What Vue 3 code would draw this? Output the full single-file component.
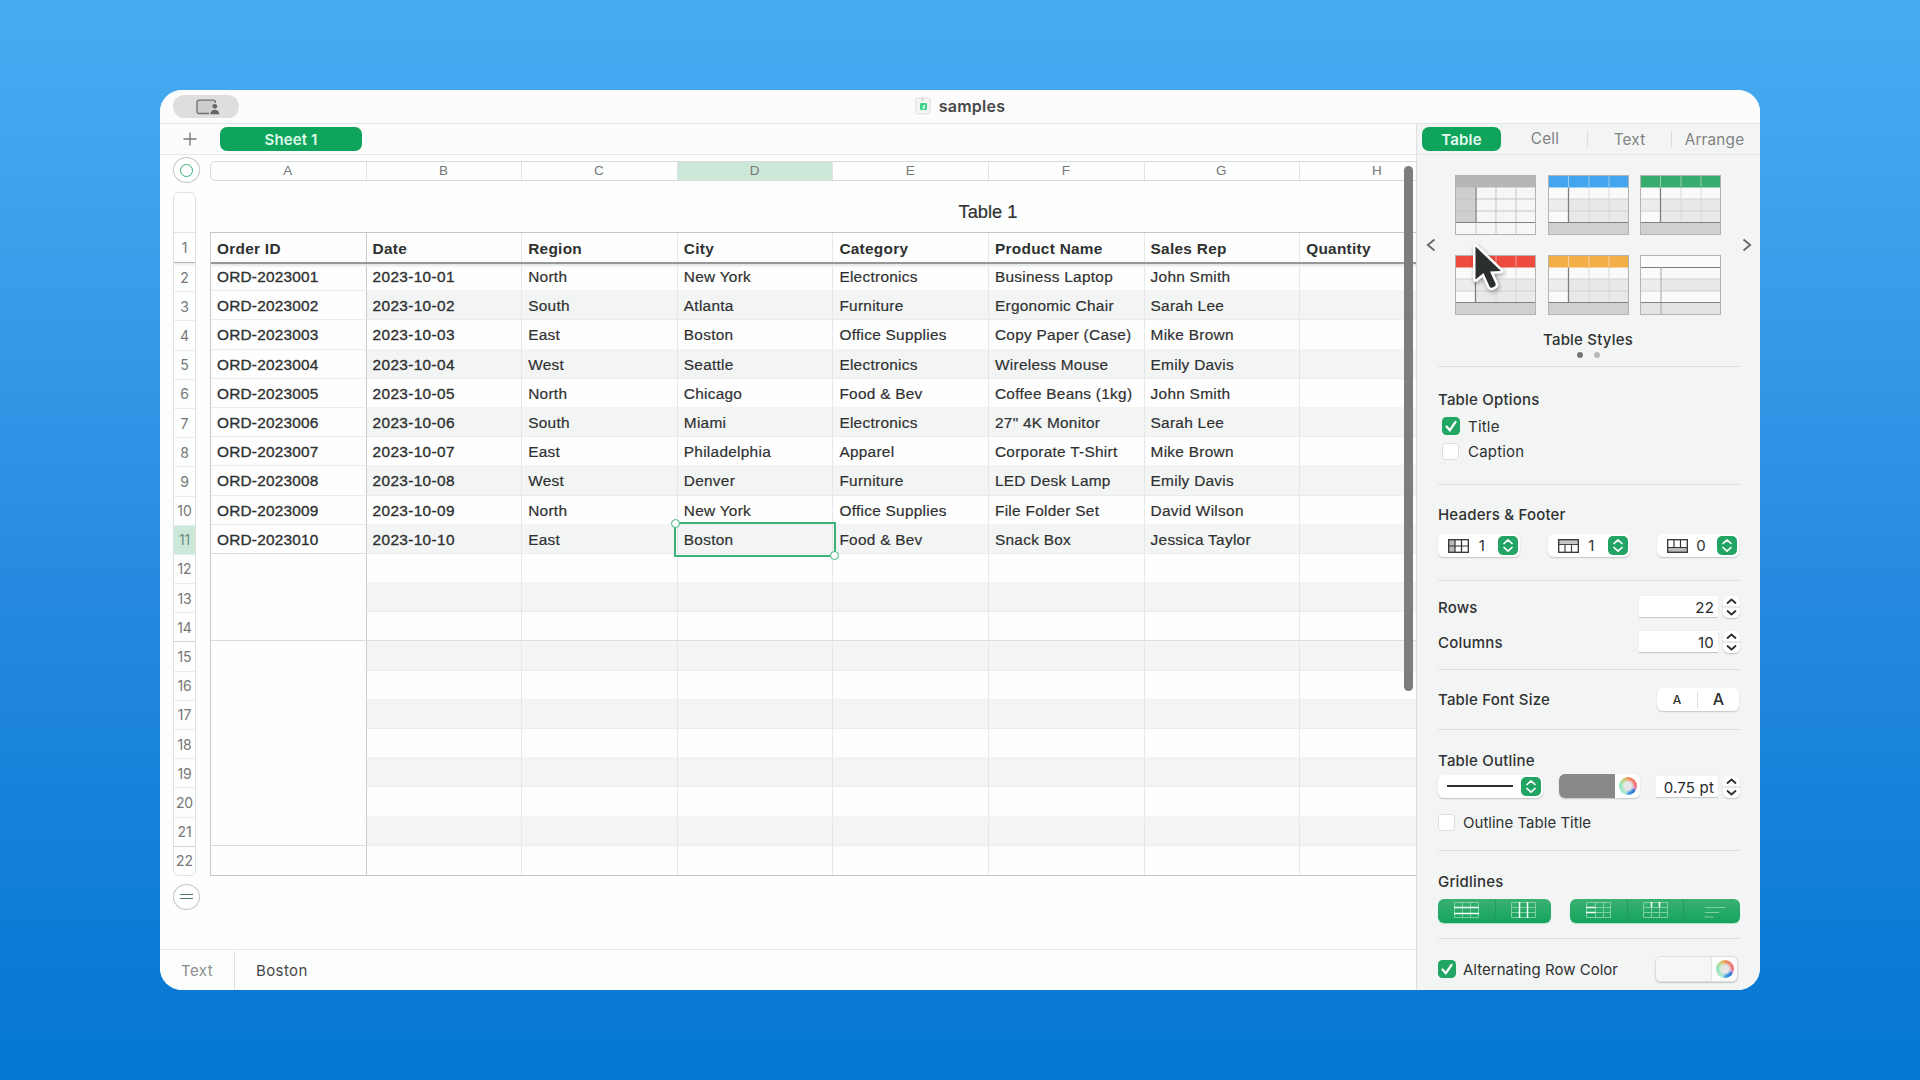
<script setup>
const letters = ['A', 'B', 'C', 'D', 'E', 'F', 'G', 'H']
const heads = ['Order ID', 'Date', 'Region', 'City', 'Category', 'Product Name', 'Sales Rep', 'Quantity']
const orders = [
  ['ORD-2023001', '2023-10-01', 'North', 'New York', 'Electronics', 'Business Laptop', 'John Smith'],
  ['ORD-2023002', '2023-10-02', 'South', 'Atlanta', 'Furniture', 'Ergonomic Chair', 'Sarah Lee'],
  ['ORD-2023003', '2023-10-03', 'East', 'Boston', 'Office Supplies', 'Copy Paper (Case)', 'Mike Brown'],
  ['ORD-2023004', '2023-10-04', 'West', 'Seattle', 'Electronics', 'Wireless Mouse', 'Emily Davis'],
  ['ORD-2023005', '2023-10-05', 'North', 'Chicago', 'Food & Bev', 'Coffee Beans (1kg)', 'John Smith'],
  ['ORD-2023006', '2023-10-06', 'South', 'Miami', 'Electronics', '27" 4K Monitor', 'Sarah Lee'],
  ['ORD-2023007', '2023-10-07', 'East', 'Philadelphia', 'Apparel', 'Corporate T-Shirt', 'Mike Brown'],
  ['ORD-2023008', '2023-10-08', 'West', 'Denver', 'Furniture', 'LED Desk Lamp', 'Emily Davis'],
  ['ORD-2023009', '2023-10-09', 'North', 'New York', 'Office Supplies', 'File Folder Set', 'David Wilson'],
  ['ORD-2023010', '2023-10-10', 'East', 'Boston', 'Food & Bev', 'Snack Box', 'Jessica Taylor'],
]
const rows = Array.from({ length: 21 }, (_, i) => ({ n: i + 2, cells: letters.map((_, c) => (orders[i] || [])[c] || '') }))
const styles = [
  { head: '#b5b7b7', kind: 'grey' },
  { head: '#43a5ee', kind: 'band' },
  { head: '#38ac6c', kind: 'band' },
  { head: '#ee4b3e', kind: 'band' },
  { head: '#f3ae48', kind: 'band' },
  { head: '#fcfcfc', kind: 'plain' },
]
const headerMenus = [
  { v: '1', kind: 'col' },
  { v: '1', kind: 'row' },
  { v: '0', kind: 'foot' },
]
</script>

<template>
  <div class="desktop">
    <div class="window">
      <header class="titlebar">
        <div class="pill">
          <svg width="24" height="16" viewBox="0 0 24 16">
            <path d="M13 14.500H3A1.800 1.800 0 0 1 1 12.700V3A1.800 1.800 0 0 1 3 1.200H17.500A1.800 1.800 0 0 1 19.500 3V4" fill="#cdcdcd" stroke="#6f6f6f" stroke-width="1.300" />
            <circle cx="18.800" cy="7.300" r="2.400" fill="#666" />
            <path d="M14.300 15.300c0-3 1.800-4.600 4.500-4.600s4.500 1.600 4.500 4.600z" fill="#666" />
          </svg>
        </div>
        <div class="doc">
          <svg width="16" height="18" viewBox="0 0 16 18">
            <rect x="1" y="1" width="14" height="16" rx="1.500" fill="#f6f6f6" stroke="#dcdcdc" />
            <path d="M7.500 0v4" stroke="#cfd4d1" stroke-width="2" />
            <rect x="5" y="6" width="7" height="7" rx="1" fill="#3fd28a" />
            <path d="M7 10.500h1.500V8H10v3.500H7z" fill="#e9fff4" />
          </svg>
          <span>samples</span>
        </div>
      </header>

      <div class="body">
        <main class="main">
          <div class="sheetbar">
            <svg class="plus" width="14" height="14" viewBox="0 0 14 14"><path d="M7 .5v13M.5 7h13" stroke="#777" stroke-width="1.400" /></svg>
            <div class="sheet">Sheet 1</div>
          </div>

          <div class="canvas">
            <div class="gutter">
              <div class="round"><i class="ring"></i></div>
              <div class="nums">
                <div class="n blank"></div>
                <div class="n first">1</div>
                <div v-for="r in rows" :key="r.n" class="n" :class="{ on: r.n === 11, ruled: [14, 21].includes(r.n) }">{{ r.n }}</div>
              </div>
              <div class="round"><i class="eq"></i></div>
            </div>
            <div class="sheetarea">
              <div class="letters">
                <div v-for="l in letters" :key="l" class="l" :class="{ on: l === 'D' }">{{ l }}</div>
              </div>
              <div class="tname">Table 1</div>
              <div class="table">
                <div class="tr head">
                  <div v-for="(h, i) in heads" :key="i" class="td">{{ h }}</div>
                </div>
                <div v-for="r in rows" :key="r.n" class="tr" :class="{ alt: r.n % 2, full: [11, 14, 21].includes(r.n), empty: r.n > 11 }">
                  <div v-for="(c, i) in r.cells" :key="i" class="td">
                    {{ c }}
                    <span v-if="r.n === 11 && i === 3" class="sel"><i></i><i></i></span>
                  </div>
                </div>
              </div>
            </div>
            <div class="scroll"></div>
          </div>

          <footer class="status">
            <span class="kind">Text</span>
            <span class="value">Boston</span>
          </footer>
        </main>

        <aside class="side">
          <nav class="tabs">
            <span class="tab on">Table</span>
            <span class="tab cell">Cell</span>
            <span class="tab text">Text</span>
            <span class="tab arr">Arrange</span>
          </nav>

          <section class="styles">
            <div class="picker">
              <svg width="10" height="14" viewBox="0 0 10 14"><path d="M8.500 1.500L1.800 7l6.700 5.500" fill="none" stroke="#666" stroke-width="1.800" /></svg>
              <div class="thumbs">
                <svg v-for="(s, i) in styles" :key="i" width="81" height="60" viewBox="0 0 81 60">
                  <rect x=".5" y=".5" width="80" height="59" :fill="s.kind === 'grey' ? '#f6f6f6' : '#fafafa'" />
                  <template v-if="s.kind === 'grey'">
                    <rect x="0" y="12" width="20" height="35" fill="#cdcfcf" />
                    <path d="M0 24h81M0 36h81M41 12v47M61 12v47" stroke="#c3c5c5" />
                    <path d="M21 12v35" stroke="#8a8c8c" stroke-width="1.500" />
                    <path d="M21 47v12" stroke="#c3c5c5" />
                  </template>
                  <template v-else>
                    <rect v-if="s.kind === 'plain'" x="21" y="24" width="60" height="12" fill="#e7e8ea" />
                    <rect v-else x="21" y="24" width="60" height="23" fill="#e8e9eb" />
                    <rect x="0" y="24" width="20" height="12" fill="#ededee" />
                    <path d="M0 24h81M0 36h81" stroke="#cfd1d2" />
                    <path v-if="s.kind === 'band'" d="M41 12v35M61 12v35" stroke="#d6d8d9" />
                    <rect x="0" y="48" width="81" height="12" :fill="s.kind === 'plain' ? '#e2e3e4' : '#cfd0d0'" />
                  </template>
                  <rect x="0" y="0" width="81" height="12.500" :fill="s.head" />
                  <path v-if="s.kind === 'band'" d="M20.500 1v11M41 1v11M61 1v11" stroke="#fff" stroke-opacity=".45" />
                  <path v-if="s.kind === 'plain'" d="M0 12.500h81" stroke="#7b7d7d" />
                  <path v-if="s.kind === 'plain'" d="M21 12v47" stroke="#a3a5a5" />
                  <path v-if="s.kind === 'band'" d="M20.500 12.500v35" stroke="#7e8080" stroke-width="1.300" />
                  <path d="M0 47.500h81" stroke="#808282" />
                  <rect x=".5" y=".5" width="80" height="59" fill="none" stroke="#b2b4b4" />
                </svg>
              </div>
              <svg width="10" height="14" viewBox="0 0 10 14"><path d="M1.500 1.500L8.200 7l-6.700 5.500" fill="none" stroke="#666" stroke-width="1.800" /></svg>
            </div>
            <div class="slabel">Table Styles</div>
            <div class="dots"><i></i><i></i></div>
          </section>

          <section class="sec s-opt">
            <h4>Table Options</h4>
            <label class="check indent"><svg width="18" height="18" viewBox="0 0 18 18"><rect width="18" height="18" rx="4.500" fill="#21a663" /><path d="M4.500 9.500l3.300 3.700L13.500 5" fill="none" stroke="#fff" stroke-width="2.200" stroke-linecap="round" /></svg>Title</label>
            <label class="check indent"><i class="box"></i>Caption</label>
          </section>

          <section class="sec s-head">
            <h4>Headers &amp; Footer</h4>
            <div class="line">
              <div v-for="(m, i) in headerMenus" :key="i" class="menu">
                <svg width="21" height="14" viewBox="0 0 21 14">
                  <rect x=".7" y=".7" width="19.600" height="12.600" fill="#fff" />
                  <rect v-if="m.kind === 'col'" x="1" y="1" width="6" height="12" fill="#b9bbbb" />
                  <rect v-if="m.kind === 'row'" x="1" y="1" width="19" height="4.500" fill="#c4c6c6" />
                  <rect v-if="m.kind === 'foot'" x="1" y="8.500" width="19" height="4.500" fill="#b9bbbb" />
                  <path v-if="m.kind === 'col'" d="M7 1v12M13.500 1v12M1 7h19" stroke="#333" stroke-width="1.200" />
                  <path v-if="m.kind === 'row'" d="M7 5.500V13M13.500 5.500V13M1 5.500h19" stroke="#444" stroke-width="1.200" />
                  <path v-if="m.kind === 'foot'" d="M7 1v7.500M13.500 1v7.500M1 8.500h19" stroke="#333" stroke-width="1.200" />
                  <rect x=".7" y=".7" width="19.600" height="12.600" fill="none" stroke="#333" stroke-width="1.300" />
                </svg>
                <b>{{ m.v }}</b>
                <svg class="ud" width="20" height="19" viewBox="0 0 20 19"><rect width="20" height="19" rx="5" fill="#22a564" /><path d="M6 7.500l4-3.700 4 3.700M6 11.500l4 3.700 4-3.700" fill="none" stroke="#fff" stroke-width="1.700" stroke-linecap="round" stroke-linejoin="round" /></svg>
              </div>
            </div>
          </section>

          <section class="sec s-rows">
            <div v-for="f in [['Rows', '22'], ['Columns', '10']]" :key="f[0]" class="frow">
              <h4>{{ f[0] }}</h4>
              <span class="field">{{ f[1] }}</span>
              <span class="step"><svg width="17" height="22" viewBox="0 0 17 22"><path d="M4.500 7l4-3.500 4 3.500M4.500 15l4 3.500 4-3.500" fill="none" stroke="#2d2d2d" stroke-width="1.800" stroke-linecap="round" stroke-linejoin="round" /><path d="M0 11h17" stroke="#d0d2d2" /></svg></span>
            </div>
          </section>

          <section class="sec s-font">
            <h4>Table Font Size</h4>
            <div class="seg"><span class="sm">A</span><span class="lg">A</span></div>
          </section>

          <section class="sec s-outline">
            <h4>Table Outline</h4>
            <div class="line">
              <div class="menu wide">
                <i class="stroke"></i>
                <svg class="ud" width="20" height="19" viewBox="0 0 20 19"><rect width="20" height="19" rx="5" fill="#22a564" /><path d="M6 7.500l4-3.700 4 3.700M6 11.500l4 3.700 4-3.700" fill="none" stroke="#fff" stroke-width="1.700" stroke-linecap="round" stroke-linejoin="round" /></svg>
              </div>
              <div class="color"><i class="fill dark"></i><i class="wheel"></i></div>
              <span class="field pt">0.75 pt</span>
              <span class="step"><svg width="17" height="22" viewBox="0 0 17 22"><path d="M4.500 7l4-3.500 4 3.500M4.500 15l4 3.500 4-3.500" fill="none" stroke="#2d2d2d" stroke-width="1.800" stroke-linecap="round" stroke-linejoin="round" /><path d="M0 11h17" stroke="#d0d2d2" /></svg></span>
            </div>
            <label class="check tight"><i class="box"></i>Outline Table Title</label>
          </section>

          <section class="sec s-grid">
            <h4>Gridlines</h4>
            <div class="line">
              <div class="gseg two">
                <span><svg width="25" height="16" viewBox="0 0 25 16"><path d="M.5.5h24v15H.5zM8.500.5v15M16.500.5v15" fill="none" stroke="#7fcfa2" /><path d="M0 5.500h25M0 11.500h25" stroke="#f2fff8" stroke-width="1.400" /></svg></span>
                <span><svg width="25" height="16" viewBox="0 0 25 16"><path d="M.5.5h24v15H.5zM.5 5.500h24M.5 10.500h24" fill="none" stroke="#7fcfa2" /><path d="M8.500 0v16M16.500 0v16" stroke="#f2fff8" stroke-width="1.500" /></svg></span>
              </div>
              <div class="gseg three">
                <span><svg width="25" height="16" viewBox="0 0 25 16"><path d="M.5.5h24v15H.5zM9.500.5v15M17.500.5v15M.5 5.500h24M.5 10.500h24" fill="none" stroke="#7fcfa2" /><path d="M0 5.500h9.500M0 10.500h9.500" stroke="#f2fff8" stroke-width="1.600" /></svg></span>
                <span><svg width="25" height="16" viewBox="0 0 25 16"><path d="M.5.5h24v15H.5zM8.500.5v15M16.500.5v15M.5 5.500h24M.5 10.500h24" fill="none" stroke="#7fcfa2" /><path d="M8.500 0v5.500M16.500 0v5.500" stroke="#f2fff8" stroke-width="1.600" /></svg></span>
                <span><svg width="25" height="16" viewBox="0 0 25 16"><path d="M5 5.500h20M5 10.500h14M4.500 15h9" fill="none" stroke="#7fcfa2" /></svg></span>
              </div>
            </div>
          </section>

          <section class="sec s-alt">
            <label class="check tight"><svg width="18" height="18" viewBox="0 0 18 18"><rect width="18" height="18" rx="4.500" fill="#21a663" /><path d="M4.500 9.500l3.300 3.700L13.500 5" fill="none" stroke="#fff" stroke-width="2.200" stroke-linecap="round" /></svg>Alternating Row Color</label>
            <div class="color lite"><i class="fill"></i><i class="wheel"></i></div>
          </section>
        </aside>
      </div>
    </div>

    <svg class="cursor" width="40" height="54" viewBox="-6 -6 40 54">
      <path d="M.5 .5V33.500L8.500 27 14.500 40.500Q15.500 42.500 17.500 41.500L19.500 40.500Q21.500 39.500 20.500 37.500L15 25.500 26 25Z" fill="#2b2f2f" stroke="#fff" stroke-width="5" stroke-linejoin="round" paint-order="stroke" />
    </svg>
  </div>
</template>

<style>
body { margin: 0; overflow: hidden; }
</style>

<style scoped>
* { box-sizing: border-box; }
.desktop {
  position: relative; width: 1920px; height: 1080px; padding: 90px 160px;
  background: linear-gradient(180deg, #48acf2 0%, #43a7f0 10%, #258adf 55%, #0b7ad5 90%, #0578d3 100%);
  font-family: Inter, "Noto Sans", sans-serif; color: #2f3131;
}
.window { width: 1600px; height: 900px; border-radius: 22px; overflow: hidden; background: #fdfefe; display: flex; flex-direction: column; }
.titlebar { height: 34px; flex: none; border-bottom: 1px solid #e2e3e3; background: #fcfcfc; display: grid; grid-template-columns: 1fr auto 1fr; align-items: center; padding: 0 13px; }
.pill { width: 66px; height: 23px; border-radius: 12px; background: #dedede; display: flex; align-items: center; justify-content: center; }
.pill svg { margin-left: 3px; }
.doc { display: flex; align-items: center; gap: 8px; font-size: 16px; font-weight: 600; color: #484848; letter-spacing: .25px; height: 30px; padding-bottom: 2px; }
.body { flex: 1; display: flex; min-height: 0; }
.main { width: 1256px; flex: none; display: flex; flex-direction: column; }
.sheetbar { height: 31px; flex: none; border-bottom: 1px solid #e4e5e5; background: #fcfcfc; display: flex; align-items: center; padding-left: 23px; }
.sheet { margin-left: 23px; width: 142px; height: 24px; border-radius: 7px; background: #0fa45c; color: #dff8ea; font-size: 15px; font-weight: 600; text-align: center; line-height: 25px; letter-spacing: .1px; }
.canvas { flex: 1; position: relative; display: flex; overflow: hidden; min-height: 0; }
.gutter { width: 50px; flex: none; padding-left: 13px; display: flex; flex-direction: column; }
.round { flex: none; width: 27px; height: 26px; margin-top: 2px; border: 1.500px solid #c3c5c5; border-radius: 50%; display: flex; align-items: center; justify-content: center; background: #fff; }
.nums + .round { margin-top: 8px; }
.ring { width: 13px; height: 13px; border: 1.500px solid #2fb573; border-radius: 50%; }
.eq { width: 13px; height: 5px; border: solid #4f7d66; border-width: 1.500px 0; }
.nums { flex: none; margin-top: 9px; width: 23px; border: 1px solid #dfe1e1; border-radius: 6px; overflow: hidden; color: #777; font-size: 14px; letter-spacing: -.1px; }
.n { height: 29.200px; display: flex; align-items: center; justify-content: center; border-bottom: 1px solid #ebecec; }
.n.blank { height: 40px; border-color: #e3e4e4; }
.n.first { height: 30px; border-bottom: 1px solid #b5b7b7; box-shadow: 0 2px 2px #e9eaea; }
.n.ruled { border-color: #d2d4d4; }
.n.on { background: #cbe8d9; color: #6f8d7e; }
.n:last-child { border: 0; height: 28px; }
.sheetarea { flex: none; width: 1206px; overflow: hidden; }
.letters { margin-top: 6px; width: 1556px; height: 20px; display: grid; grid-template-columns: repeat(8, 155.600px); border: 1px solid #d9dbdb; border-radius: 5px 0 0 5px; }
.l { display: flex; align-items: center; justify-content: center; border-right: 1px solid #e1e3e3; font-size: 13.500px; line-height: 17px; color: #777; font-family: "Liberation Sans", Arial, sans-serif; padding: 0 1px 1px 0; }
.l.on { background: #cbe8d9; }
.tname { width: 1556px; height: 51px; padding-top: 10px; text-align: center; font: 18.300px/42px "Liberation Sans", Arial, sans-serif; -webkit-text-stroke: .2px; }
.table { width: 1556px; border: 1px solid #c6c8c8; font: 15.400px "Liberation Sans", Arial, sans-serif; letter-spacing: .28px; background: #fefefe; -webkit-text-stroke: .2px; }
.tr { display: grid; grid-template-columns: repeat(8, 155.600px); height: 29.200px; }
.td { position: relative; display: flex; align-items: center; padding: 2px 0 0 6px; border-right: 1px solid #e6e8e8; border-bottom: 1px solid #f2f4f4; white-space: nowrap; }
.td:first-child { border-right-color: #cbcdcd; border-bottom-color: #ebecec; }
.tr.empty .td:first-child { border-bottom-color: #fafbfb; }
.tr:not(.head) .td:nth-child(-n + 2) { -webkit-text-stroke: .35px; letter-spacing: .35px; }
.tr:not(.head) .td:first-child { letter-spacing: .2px; }
.tr.alt .td:not(:first-child) { background: #f3f5f5; border-bottom-color: #ebeded; }
.tr.full .td, .tr.full .td:first-child { border-bottom-color: #dcdede; }
.tr.head { position: relative; z-index: 1; height: 31px; margin-bottom: -2px; border-bottom: 2px solid #979999; box-shadow: 0 2px 2px #e4e6e6; font-weight: 700; background: #fefefe; -webkit-text-stroke: 0; }
.tr.head .td { border-bottom: 0; padding-top: 2px; }
.tr:last-child .td { border-bottom: 0; }
.sel { position: absolute; left: -4px; top: -3px; width: 162px; height: 35px; border: 2px solid #3bb377; z-index: 2; }
.sel i { position: absolute; width: 9px; height: 9px; border: 1.500px solid #3bb377; border-radius: 50%; background: #fff; left: -5px; top: -5px; }
.sel i + i { left: auto; top: auto; right: -5px; bottom: -5px; }
.scroll { position: absolute; left: 1244px; top: 11px; width: 9px; height: 525px; border-radius: 5px; background: #7c7e7e; z-index: 3; }
.status { height: 41px; flex: none; border-top: 1px solid #e4e5e5; background: #fcfdfd; display: flex; align-items: center; font-size: 15px; letter-spacing: .4px; }
.kind { width: 75px; height: 39px; line-height: 39px; text-align: center; color: #8b8d8d; border-right: 1px solid #dfe1e1; }
.value { margin-left: 21px; color: #454747; }

.side { flex: 1; border-left: 1px solid #dddfdf; background: #f3f5f5; display: flex; flex-direction: column; font-size: 15px; letter-spacing: .2px; }
.tabs { height: 31px; flex: none; border-bottom: 1px solid #e4e6e6; display: flex; align-items: center; padding-left: 5px; color: #808282; font-size: 15.300px; }
.tab { text-align: center; line-height: 26px; }
.tab.on { width: 79px; height: 24px; border-radius: 7px; background: #0fa45c; color: #e6fbf0; font-weight: 600; font-size: 15px; line-height: 25px; }
.tab.cell { width: 86px; padding-left: 2px; }
.tab.text { width: 84px; }
.tab.text, .tab.arr { border-left: 1px solid #dcdede; height: 17px; line-height: 18px; }
.tab.arr { width: 86px; }
.styles { height: 212px; flex: none; margin: 0 20px 0 21px; border-bottom: 1px solid #dfe1e1; }
.picker { margin: 0 -12px; padding-top: 20px; display: flex; align-items: center; justify-content: space-between; }
.thumbs { display: grid; grid-template-columns: repeat(3, 81px); gap: 20px 11.500px; margin-right: 2px; }
.thumbs svg { display: block; }
.slabel { margin: 12px 2px 0 0; height: 24px; line-height: 25px; text-align: center; font-weight: 500; }
.dots { display: flex; gap: 11px; justify-content: center; margin: 1px 2px 0 0; }
.dots i { width: 6px; height: 6px; border-radius: 50%; background: #777; }
.dots i + i { background: #b9bbbb; }
.sec { flex: none; margin: 0 20px 0 21px; border-bottom: 1px solid #dfe1e1; }
h4 { margin: 0; height: 24px; line-height: 24px; font-size: 15px; font-weight: 500; }
.check { display: flex; align-items: center; gap: 8px; height: 24px; white-space: nowrap; }
.check.indent { padding-left: 4px; }
.check.tight { gap: 7px; letter-spacing: .02px; }
.box { width: 17px; height: 17px; margin-right: 1px; border-radius: 4px; background: #fff; border: 1px solid #dcdede; }
.line { display: flex; justify-content: space-between; align-items: center; }
.s-opt { height: 118px; padding-top: 21px; }
.s-opt .check + .check { margin-top: 1px; }
.s-opt h4 { margin-bottom: 2px; }
.s-head { height: 96px; padding-top: 18px; }
.s-head .line { margin: 7px 1px 0 0; }
.menu { width: 82px; height: 23px; border-radius: 6px; background: #fff; box-shadow: 0 1px 1.500px #c3c5c5; display: flex; align-items: center; padding: 0 2px 0 10px; }
.menu b { font-weight: 400; width: 26px; text-align: center; }
.menu .ud { margin-left: auto; }
.menu.wide { width: 105px; padding-left: 9px; }
.stroke { width: 66px; height: 2px; background: #2d2d2d; }
.s-rows { height: 89px; padding-top: 14px; }
.frow { display: flex; align-items: center; height: 24px; margin-bottom: 11px; }
.frow h4 { flex: 1; line-height: 25px; }
.field { width: 79px; height: 22px; background: #fff; border-bottom: 1px solid #c9cbcb; box-shadow: 0 0 1px #ddd; text-align: right; line-height: 23px; padding-right: 4px; white-space: nowrap; color: #262828; }
.step { margin-left: 5px; width: 17px; height: 22px; border-radius: 6px; background: #fff; box-shadow: 0 1px 1.500px #bfc1c1; }
.step svg { display: block; }
.s-font { height: 60px; padding-top: 18px; display: flex; justify-content: space-between; }
.seg { display: grid; grid-template-columns: 1fr 1fr; width: 82px; height: 23px; border-radius: 6px; background: #fff; box-shadow: 0 1px 1.500px #c3c5c5; text-align: center; line-height: 23px; margin-right: 1px; font-weight: 500; }
.seg .sm { font-size: 12px; margin: 4px 0; line-height: 16px; border-right: 1px solid #dcdede; }
.seg .lg { font-size: 16px; line-height: 22px; }
.s-outline { height: 121px; padding-top: 19px; }
.s-outline .line { margin-top: 1px; justify-content: flex-start; }
.color { margin-left: 16px; width: 81px; height: 24px; border-radius: 6px; overflow: hidden; background: #fff; box-shadow: 0 1px 1.500px #c3c5c5; display: flex; align-items: center; }
.fill { width: 56px; height: 100%; }
.fill.dark { background: #878989; }
.wheel { width: 18px; height: 18px; margin-left: 4px; border-radius: 50%; background: radial-gradient(circle, #e6e6e6 0 30%, transparent 55%), conic-gradient(#f08a5c, #ee6f7e 25%, #c98fd0 31%, #2371cf 35%, #3f98e6 48%, #a9e8d4 55%, #8fe6b4 78%, #b9d98a 88%, #f0a24c); }
.pt { margin: 2px 0 0 16px; width: 62px; }
.s-outline .step { margin-top: 2px; }
.s-outline .check { margin-top: 12px; }
.s-grid { height: 88px; padding-top: 19px; }
.s-grid .line { margin-top: 5px; }
.gseg { height: 24px; border-radius: 6px; background: linear-gradient(#3bb072, #14a35c); display: grid; box-shadow: 0 1px 1px #a9dcc0; }
.gseg span { display: flex; justify-content: center; padding-top: 3px; }
.gseg span + span { border-left: 1px solid #229c5f; }
.gseg.two { width: 113px; grid-template-columns: 1fr 1fr; }
.gseg.three { width: 170px; grid-template-columns: 1fr 1fr 1fr; }
.s-alt { flex: 1; border: 0; padding-top: 17px; display: flex; justify-content: space-between; align-items: flex-start; }
.s-alt .check { height: 26px; }
.lite { background: #fcfcfc; border: 1px solid #dcdede; height: 26px; width: 83px; margin-right: 2px; }
.lite .fill { background: #f5f7f7; border-right: 1px solid #e3e5e5; }
.cursor { position: absolute; left: 1469px; top: 240px; filter: drop-shadow(1px 2px 2px rgba(0, 0, 0, .35)); }
</style>
